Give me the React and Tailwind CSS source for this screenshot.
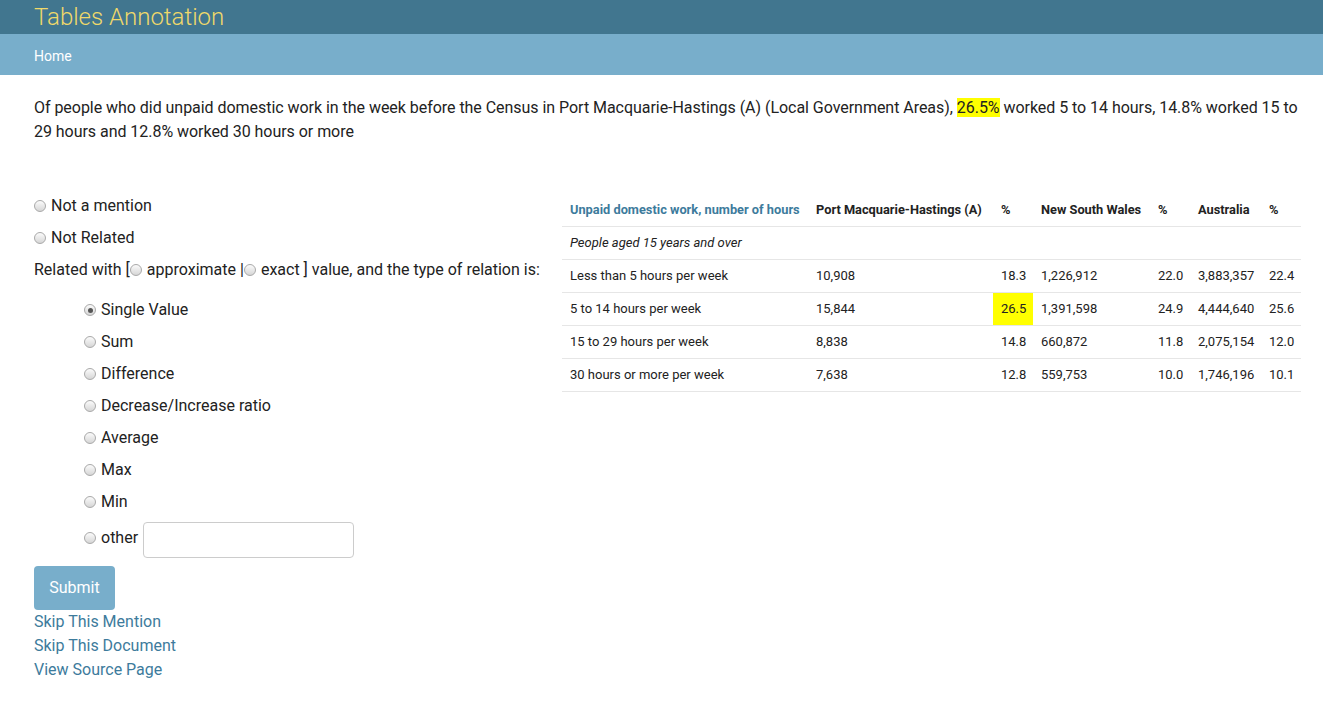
import React from 'react';

const rows = [
  ['Less than 5 hours per week', '10,908', '18.3', '1,226,912', '22.0', '3,883,357', '22.4'],
  ['5 to 14 hours per week', '15,844', '26.5', '1,391,598', '24.9', '4,444,640', '25.6'],
  ['15 to 29 hours per week', '8,838', '14.8', '660,872', '11.8', '2,075,154', '12.0'],
  ['30 hours or more per week', '7,638', '12.8', '559,753', '10.0', '1,746,196', '10.1'],
];

const relations = ['Single Value', 'Sum', 'Difference', 'Decrease/Increase ratio', 'Average', 'Max', 'Min'];

function Radio({ checked }) {
  return (
    <span className="inline-flex items-center justify-center w-[12px] h-[12px] rounded-full border border-[#a9a9a9] bg-gradient-to-b from-[#fbfbfb] to-[#d6d6d6] shrink-0">
      {checked && <span className="w-[5px] h-[5px] rounded-full bg-[#555]" />}
    </span>
  );
}

export default function App() {
  return (
    <div className="min-h-screen bg-white text-[#222] font-['Roboto',sans-serif]">
      <div className="h-[34px] bg-[#41768f] pl-[34px] flex items-center">
        <span className="text-[24px] font-light text-[#f0d96a] leading-none">Tables Annotation</span>
      </div>
      <div className="h-[41px] bg-[#78aecb] pl-[34px] pt-[4px] flex items-center">
        <span className="text-[14px] text-white">Home</span>
      </div>

      <div className="pl-[34px] pr-[18px]">
        <p className="pt-[21px] text-[16px] leading-[24px] tracking-[-0.04px]">
          Of people who did unpaid domestic work in the week before the Census in Port Macquarie-Hastings (A) (Local Government Areas),{' '}
          <span className="bg-[#ffff00]">26.5%</span> worked 5 to 14 hours, 14.8% worked 15 to 29 hours and 12.8% worked 30 hours or more
        </p>

        <div className="flex mt-[45px]">
          <div className="w-[528px] shrink-0 pt-[1px] text-[16px]">
            <label className="flex items-center gap-[5px] h-[32px]">
              <Radio /> Not a mention
            </label>
            <label className="flex items-center gap-[5px] h-[32px]">
              <Radio /> Not Related
            </label>
            <div className="flex items-center h-[32px]">
              Related with [<Radio /><span className="ml-[5px]">approximate |</span><Radio /><span className="ml-[5px]">exact ] value, and the type of relation is:</span>
            </div>
            <div className="pl-[50px] pt-[8px]">
              {relations.map((r, i) => (
                <label key={r} className="flex items-center gap-[5px] h-[32px]">
                  <Radio checked={i === 0} /> {r}
                </label>
              ))}
              <label className="flex items-center gap-[5px] h-[40px]">
                <Radio /> other
                <input type="text" className="self-end w-[211px] h-[36px] border border-[#ccc] rounded-[4px]" />
              </label>
            </div>
            <button className="mt-[8px] w-[81px] h-[44px] bg-[#78aecb] text-white text-[16px] rounded-[4px]">Submit</button>
            <div className="flex flex-col text-[#3d7b9c] leading-[24px]">
              <a href="#">Skip This Mention</a>
              <a href="#">Skip This Document</a>
              <a href="#">View Source Page</a>
            </div>
          </div>

          <table className="w-[739px] mt-[4px] table-fixed border-collapse text-[13px] self-start">
            <colgroup>
              <col className="w-[246px]" />
              <col className="w-[185px]" />
              <col className="w-[40px]" />
              <col className="w-[117px]" />
              <col className="w-[40px]" />
              <col className="w-[71px]" />
              <col className="w-[40px]" />
            </colgroup>
            <thead>
              <tr className="h-[33px] border-b border-[#e6e6e6] text-[12.8px] font-bold text-left whitespace-nowrap">
                <th className="px-[8px] text-[#3d7b9c]">Unpaid domestic work, number of hours</th>
                <th className="px-[8px]">Port Macquarie-Hastings (A)</th>
                <th className="px-[8px]">%</th>
                <th className="px-[8px]">New South Wales</th>
                <th className="px-[8px]">%</th>
                <th className="px-[8px]">Australia</th>
                <th className="px-[8px]">%</th>
              </tr>
            </thead>
            <tbody>
              <tr className="h-[33px] border-b border-[#e6e6e6]">
                <td className="px-[8px] italic" colSpan={7}>People aged 15 years and over</td>
              </tr>
              {rows.map((r) => (
                <tr key={r[0]} className="h-[33px] border-b border-[#e6e6e6]">
                  {r.map((c, j) => (
                    <td
                      key={j}
                      className={j === 2 && c === '26.5' ? 'px-[8px] bg-[#ffff00]' : 'px-[8px]'}
                    >
                      {c}
                    </td>
                  ))}
                </tr>
              ))}
            </tbody>
          </table>
        </div>
      </div>
    </div>
  );
}
